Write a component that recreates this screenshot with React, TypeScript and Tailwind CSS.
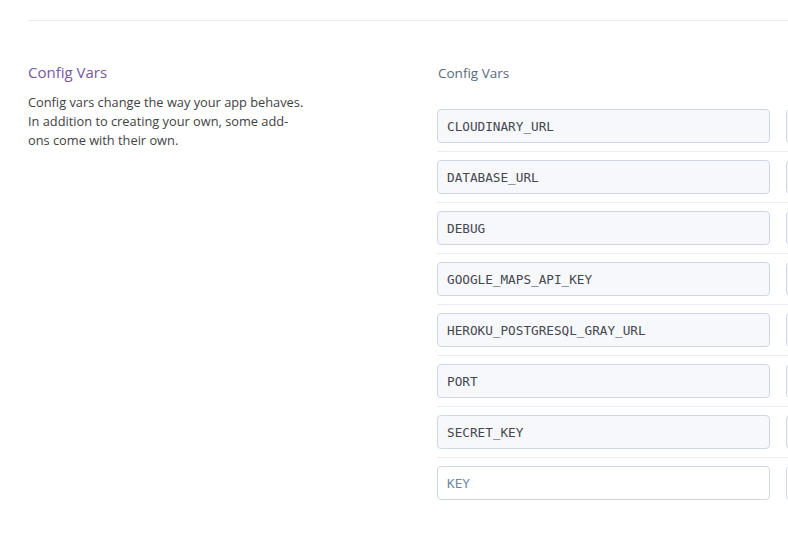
const vars = [
  "CLOUDINARY_URL",
  "DATABASE_URL",
  "DEBUG",
  "GOOGLE_MAPS_API_KEY",
  "HEROKU_POSTGRESQL_GRAY_URL",
  "PORT",
  "SECRET_KEY",
];

function VarRow({ name }: { name: string }) {
  return (
    <div className="flex gap-[16px] border-b border-[#e8ecf4] pb-[8px] pt-[8px] first:pt-0">
      <div className="flex h-[34px] w-[333px] shrink-0 items-center rounded-[4px] border border-[#cfd7e6] bg-[#f7f8fb] px-[9px] pt-[2px] font-['DejaVu_Sans_Mono',monospace] text-[12.7px] text-[#45474f]">
        {name}
      </div>
      <div className="h-[34px] w-[333px] shrink-0 rounded-[4px] border border-[#cfd7e6] bg-[#f7f8fb]" />
    </div>
  );
}

export default function App() {
  return (
    <div className="h-[552px] w-[788px] overflow-hidden bg-white font-['Open_Sans',sans-serif]">
      <div className="ml-[28px] mt-[20px] border-t border-[#e7ebf3] pt-[40px]">
        <div className="flex">
          <div className="w-[409px] shrink-0">
            <h2 className="text-[15px] leading-[22px] text-[#79589f]">Config Vars</h2>
            <p className="mt-[10px] w-[278px] text-[12.8px] leading-[19px] text-[#3f3f44]">
              Config vars change the way your app behaves. In addition to creating your own, some add-ons come with their own.
            </p>
          </div>
          <div className="min-w-0 flex-1">
            <div className="pl-[1px] pt-[1px] text-[13.5px] leading-[22px] text-[#596981]">Config Vars</div>
            <div className="mt-[25px] w-[700px]">
              {vars.map((v) => (
                <VarRow key={v} name={v} />
              ))}
              <div className="flex gap-[16px] pt-[8px]">
                <div className="flex h-[34px] w-[333px] shrink-0 items-center rounded-[4px] border border-[#cfd7e6] bg-white px-[9px] pt-[2px] font-['DejaVu_Sans_Mono',monospace] text-[12.7px] text-[#6f86a6]">
                  KEY
                </div>
                <div className="h-[34px] w-[333px] shrink-0 rounded-[4px] border border-[#cfd7e6] bg-white" />
              </div>
            </div>
          </div>
        </div>
      </div>
    </div>
  );
}
